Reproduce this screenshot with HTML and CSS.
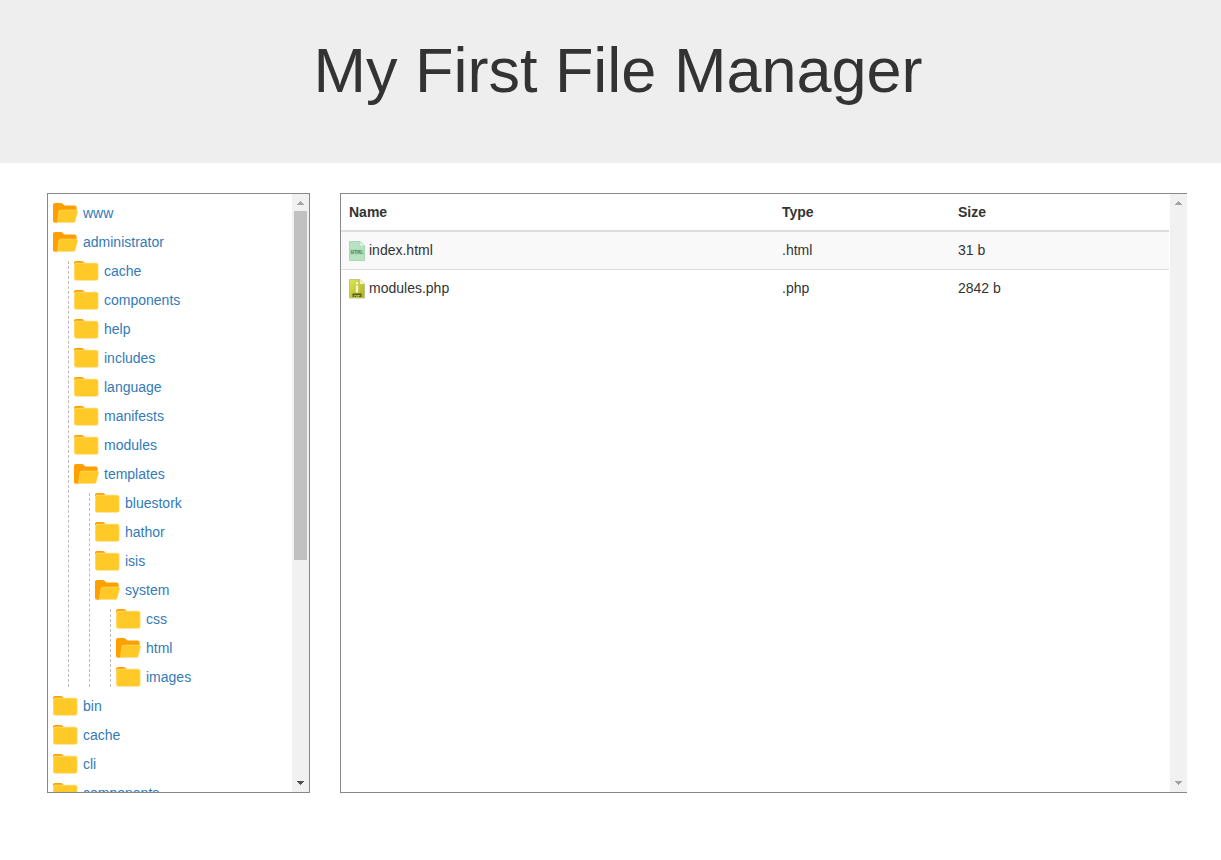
FILE: index.html
```html
<!DOCTYPE html>
<html lang="en">
<head>
    <meta charset="UTF-8">
    <meta name="viewport" content="width=device-width, initial-scale=1.0">
    <title>My First File Manager</title>
    <link rel="stylesheet" href="styles.css">
</head>
<body>
    <svg class="sprites" width="0" height="0" aria-hidden="true">
        <symbol id="folderClosed" viewBox="0 0 25 20">
            <path d="M0 4V2C0 .8.8 0 2 0h5.500c1 0 1.700.4 2.300 1L11.500 3H1z" fill="#ffa000"/>
            <rect x="0" y="1.800" width="24.500" height="18" rx="2.500" fill="#ffdf85"/>
            <rect x=".7" y="2.500" width="23.100" height="16.600" rx="1.800" fill="#ffca28"/>
        </symbol>
        <symbol id="folderOpen" viewBox="0 0 25 20">
            <path d="M0 2C0 .8.8 0 2 0h5.500c1 0 1.700.4 2.300 1l1.500 1.600H21.500c1.300 0 2.100.8 2.100 2V10H7L5 19.700H2c-1.200 0-2-.8-2-2z" fill="#ffa000"/>
            <path d="M5.600 8.600C6 7.400 6.800 6.700 8 6.700h15c1.300 0 2.100 1 1.800 2.200l-2.300 9c-.3 1.100-1.100 1.800-2.300 1.800H3c.6 0 1-.5 1.200-1.500z" fill="#ffd75e"/>
            <path d="M6.300 8.900C6.600 8 7.200 7.400 8.100 7.400h14.800c.9 0 1.400.7 1.200 1.500l-2.300 8.900c-.2.800-.8 1.200-1.600 1.200H4.500c.2-.3.300-.6.400-1z" fill="#ffca28"/>
        </symbol>
    </svg>

    <header class="pageHeader">
        <h1>My First File Manager</h1>
    </header>

    <main class="manager">
        <section class="panel treePanel">
            <div class="panelBody">
                <ul class="tree rootTree">
                    <li><a class="node" href="#"><svg class="folder"><use href="#folderOpen"/></svg>www</a></li>
                    <li>
                        <a class="node" href="#"><svg class="folder"><use href="#folderOpen"/></svg>administrator</a>
                        <ul class="tree subTree">
                            <li><a class="node" href="#"><svg class="folder"><use href="#folderClosed"/></svg>cache</a></li>
                            <li><a class="node" href="#"><svg class="folder"><use href="#folderClosed"/></svg>components</a></li>
                            <li><a class="node" href="#"><svg class="folder"><use href="#folderClosed"/></svg>help</a></li>
                            <li><a class="node" href="#"><svg class="folder"><use href="#folderClosed"/></svg>includes</a></li>
                            <li><a class="node" href="#"><svg class="folder"><use href="#folderClosed"/></svg>language</a></li>
                            <li><a class="node" href="#"><svg class="folder"><use href="#folderClosed"/></svg>manifests</a></li>
                            <li><a class="node" href="#"><svg class="folder"><use href="#folderClosed"/></svg>modules</a></li>
                            <li>
                                <a class="node" href="#"><svg class="folder"><use href="#folderOpen"/></svg>templates</a>
                                <ul class="tree subTree">
                                    <li><a class="node" href="#"><svg class="folder"><use href="#folderClosed"/></svg>bluestork</a></li>
                                    <li><a class="node" href="#"><svg class="folder"><use href="#folderClosed"/></svg>hathor</a></li>
                                    <li><a class="node" href="#"><svg class="folder"><use href="#folderClosed"/></svg>isis</a></li>
                                    <li>
                                        <a class="node" href="#"><svg class="folder"><use href="#folderOpen"/></svg>system</a>
                                        <ul class="tree subTree">
                                            <li><a class="node" href="#"><svg class="folder"><use href="#folderClosed"/></svg>css</a></li>
                                            <li><a class="node" href="#"><svg class="folder"><use href="#folderOpen"/></svg>html</a></li>
                                            <li><a class="node" href="#"><svg class="folder"><use href="#folderClosed"/></svg>images</a></li>
                                        </ul>
                                    </li>
                                </ul>
                            </li>
                        </ul>
                    </li>
                    <li><a class="node" href="#"><svg class="folder"><use href="#folderClosed"/></svg>bin</a></li>
                    <li><a class="node" href="#"><svg class="folder"><use href="#folderClosed"/></svg>cache</a></li>
                    <li><a class="node" href="#"><svg class="folder"><use href="#folderClosed"/></svg>cli</a></li>
                    <li><a class="node" href="#"><svg class="folder"><use href="#folderClosed"/></svg>components</a></li>
                </ul>
            </div>
            <div class="scrollbar">
                <span class="arrow arrowUp"></span>
                <span class="thumbTrack"><span class="thumb"></span></span>
                <span class="arrow arrowDown"></span>
            </div>
        </section>

        <section class="panel filePanel">
            <div class="panelBody">
                <table class="fileTable">
                    <thead>
                        <tr>
                            <th class="colName">Name</th>
                            <th class="colType">Type</th>
                            <th>Size</th>
                        </tr>
                    </thead>
                    <tbody>
                        <tr>
                            <td>
                                <span class="fileName">
                                    <svg class="fileIcon" viewBox="0 0 16 20">
                                        <path d="M.5.5h10.500l4.500 4.500v14.500H.5z" fill="#b9e2c4" stroke="#a8d8b6"/>
                                        <path d="M11 .5V5h4.500z" fill="#eef8f1" stroke="#a8d8b6" stroke-width=".6"/>
                                        <rect x="1" y="8.500" width="14" height="5" fill="#a6d6b3"/>
                                        <text class="iconLabel htmlLabel" x="8" y="12.700">HTML</text>
                                    </svg>
                                    index.html
                                </span>
                            </td>
                            <td>.html</td>
                            <td>31 b</td>
                        </tr>
                        <tr>
                            <td>
                                <span class="fileName">
                                    <svg class="fileIcon" viewBox="0 0 16 20">
                                        <defs>
                                            <linearGradient id="phpFill" x1="0" y1="0" x2="1" y2="1">
                                                <stop offset="0" stop-color="#dfe45a"/>
                                                <stop offset="1" stop-color="#aab01c"/>
                                            </linearGradient>
                                        </defs>
                                        <path d="M.5.5h10.500l4.500 4.500v14H.5z" fill="url(#phpFill)" stroke="#c2c58a"/>
                                        <path d="M11 .5V5h4.500z" fill="#f3f5c8"/>
                                        <rect x="6.800" y="3" width="2.400" height="2.400" fill="#f4f6d0"/>
                                        <rect x="6.800" y="6.500" width="2.400" height="7" fill="#f4f6d0"/>
                                        <rect x="3.500" y="14.500" width="9" height="3.500" fill="#5a5e14"/>
                                        <text class="iconLabel phpLabel" x="8" y="17.500">PHP</text>
                                    </svg>
                                    modules.php
                                </span>
                            </td>
                            <td>.php</td>
                            <td>2842 b</td>
                        </tr>
                    </tbody>
                </table>
            </div>
            <div class="scrollbar">
                <span class="arrow arrowUp"></span>
                <span class="thumbTrack"></span>
                <span class="arrow arrowDown arrowIdle"></span>
            </div>
        </section>
    </main>
</body>
</html>
```

FILE: styles.css
```css
* {
    box-sizing: border-box;
}
body {
    margin: 0;
    background-color: #fff;
    color: #333;
    font-family: "Liberation Sans", Arial, sans-serif;
    font-size: 14px;
    line-height: 20px;
}
.sprites {
    display: block;
    height: 0;
}
.pageHeader {
    height: 163px;
    padding: 36px 0 0 15px;
    background-color: #eee;
    text-align: center;
}
.pageHeader h1 {
    margin: 0;
    font-size: 63px;
    font-weight: 400;
    line-height: 69px;
}
.manager {
    display: flex;
    gap: 30px;
    padding: 30px 0 0 47px;
}
.panel {
    display: flex;
    height: 600px;
    border: 1px solid #888;
    overflow: hidden;
}
.treePanel {
    width: 263px;
}
.filePanel {
    width: 847px;
    border-right: 0;
}
.panelBody {
    flex: 1;
    min-width: 0;
    overflow: hidden;
}
.scrollbar {
    display: flex;
    flex-direction: column;
    flex: none;
    width: 17px;
    background-color: #f1f1f1;
}
.arrow {
    display: flex;
    flex: none;
    justify-content: center;
    align-items: center;
    height: 17px;
}
/* stepped triangle, same pixels as the browser's own scrollbar arrow */
.arrow::before {
    content: "";
    width: 7px;
    height: 4px;
    background-color: #a3a3a3;
    clip-path: polygon(3px 0, 4px 0, 4px 1px, 5px 1px, 5px 2px, 6px 2px, 6px 3px, 7px 3px, 7px 4px, 0 4px, 0 3px, 1px 3px, 1px 2px, 2px 2px, 2px 1px, 3px 1px);
}
.arrowUp {
    padding-top: 1px;
}
.arrowDown {
    padding-bottom: 1px;
}
.arrowDown::before {
    background-color: #505050;
    transform: rotate(180deg);
}
.arrowDown.arrowIdle::before {
    background-color: #a3a3a3;
}
.thumbTrack {
    flex: 1;
    padding: 0 2px;
}
.thumb {
    display: block;
    height: 349px;
    background-color: #c1c1c1;
}

/* folder tree */
.tree {
    display: flex;
    flex-direction: column;
    gap: 9px;
    margin: 0;
    list-style: none;
}
.rootTree {
    padding: 9px 0 0 5px;
}
.subTree {
    margin: 9px 0 0 15px;
    padding-left: 5px;
    border-left: 1px dashed #bbb;
}
.node {
    display: flex;
    align-items: center;
    gap: 5px;
    height: 20px;
    color: #337ab7;
    text-decoration: none;
}
.folder {
    flex: none;
    width: 25px;
    height: 20px;
}

/* file list */
.filePanel .panelBody {
    padding-right: 1px;
}
.fileTable {
    width: 100%;
    border-collapse: separate;
    border-spacing: 0;
    table-layout: fixed;
}
.colName {
    width: 433px;
}
.colType {
    width: 176px;
}
.fileTable th {
    height: 38px;
    padding: 8px;
    border-bottom: 2px solid #ddd;
    text-align: left;
}
.fileTable td {
    height: 38px;
    padding: 8px;
    border-bottom: 1px solid #ddd;
    vertical-align: top;
}
.fileTable tbody tr:first-child {
    background-color: #f9f9f9;
}
.fileTable tbody tr:last-child td {
    border-bottom: 0;
}
.fileName {
    display: flex;
    align-items: flex-start;
    gap: 4px;
    height: 20px;
}
.fileIcon {
    flex: none;
    width: 16px;
    height: 20px;
    margin-top: 1px;
}
.iconLabel {
    font-family: "Liberation Mono", monospace;
    font-weight: 700;
    text-anchor: middle;
}
.htmlLabel {
    fill: #4f8f64;
    font-size: 5.200px;
}
.phpLabel {
    fill: #d6da6a;
    font-size: 3.500px;
}
```
